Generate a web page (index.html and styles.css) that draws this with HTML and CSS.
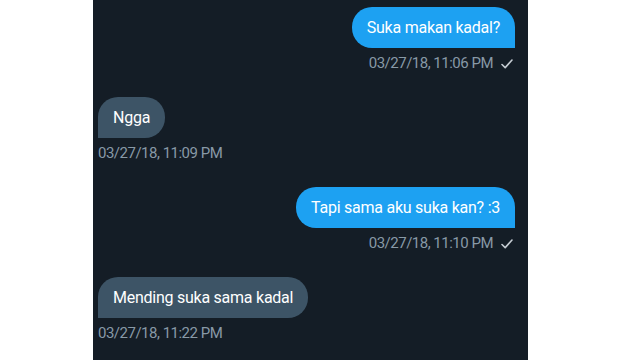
FILE: index.html
```html
<!DOCTYPE html>
<html lang="id">
<head>
  <meta charset="UTF-8">
  <title>Pesan</title>
  <link rel="stylesheet" href="styles.css">
</head>
<body>

  <div class="chat">
    <div class="pesan kirim">
      <div class="bubble">Suka makan kadal?</div>
      <div class="waktu">03/27/18, 11:06 PM
        <svg class="centang" width="12" height="10" viewBox="0 0 12 10"><polyline points="1,5.5 4.2,8.6 11,1" /></svg>
      </div>
    </div>

    <div class="pesan terima">
      <div class="bubble">Ngga</div>
      <div class="waktu">03/27/18, 11:09 PM</div>
    </div>

    <div class="pesan kirim">
      <div class="bubble">Tapi sama aku suka kan? :3</div>
      <div class="waktu">03/27/18, 11:10 PM
        <svg class="centang" width="12" height="10" viewBox="0 0 12 10"><polyline points="1,5.5 4.2,8.6 11,1" /></svg>
      </div>
    </div>

    <div class="pesan terima">
      <div class="bubble">Mending suka sama kadal</div>
      <div class="waktu">03/27/18, 11:22 PM</div>
    </div>
  </div>

</body>
</html>
```

FILE: styles.css
```css
body {
  font-family: Roboto, "Noto Sans", Arial, sans-serif;
  margin: 0;
  background-color: #fff;
}

.chat {
  width: 435px;
  height: 360px;
  margin-left: 93px;
  padding: 7px 13px 0 5px;
  box-sizing: border-box;
  background-color: #141d26;
  overflow: hidden;
}

.pesan {
  display: flex;
  flex-direction: column;
  margin-bottom: 25px;
}

.kirim {
  align-items: flex-end;
}

.terima {
  align-items: flex-start;
}

.bubble {
  height: 41px;
  line-height: 41px;
  padding: 0 15px;
  font-size: 16px;
  letter-spacing: -0.25px;
  color: #fff;
  border-radius: 20px;
}

.kirim .bubble {
  background-color: #1da1f2;
  border-bottom-right-radius: 0;
}

.terima .bubble {
  background-color: #3d5466;
  border-bottom-left-radius: 0;
}

.waktu {
  display: flex;
  align-items: center;
  margin-top: 6px;
  height: 18px;
  font-size: 15px;
  letter-spacing: -0.5px;
  color: #8899a6;
}

.kirim .waktu {
  margin-right: 2px;
}

.centang {
  margin-left: 8px;
  margin-top: 2px;
  fill: none;
  stroke: #c5ccd2;
  stroke-width: 1.6;
  stroke-linecap: round;
  stroke-linejoin: round;
}
```
